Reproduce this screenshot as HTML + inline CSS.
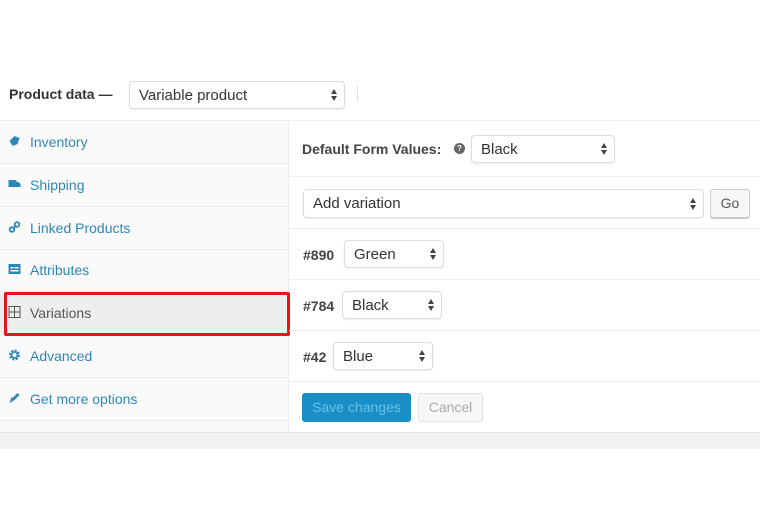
<!DOCTYPE html>
<html><head><style>
*{box-sizing:border-box;margin:0;padding:0}
body{width:760px;height:507px;background:#fff;font-family:"Liberation Sans",Arial,sans-serif;position:relative;overflow:hidden;color:#333}
.a{position:absolute}
.sel{position:absolute;background:#fff;border:1px solid #ddd;border-radius:4px;box-shadow:0 1px 2px rgba(0,0,0,.07);font-size:15px;color:#333;padding-left:9px;display:flex;align-items:center}
.arr{position:absolute;right:7px;top:50%;margin-top:-6px;width:6px;height:12px}
.arr:before{content:"";position:absolute;left:0;top:0;border-left:3px solid transparent;border-right:3px solid transparent;border-bottom:5px solid #444}
.arr:after{content:"";position:absolute;left:0;bottom:0;border-left:3px solid transparent;border-right:3px solid transparent;border-top:5px solid #444}
.side{position:absolute;left:0;top:121px;width:289px;height:311px;background:#fafafa;border-right:1px solid #eee}
.it{position:absolute;left:0;width:288px;height:43px;border-bottom:1px solid #eee;font-size:14px;color:#2e87b9;display:flex;align-items:center;padding-left:30px}
.ic{position:absolute;left:8px;top:14px;width:13px;height:12px}
.row{position:absolute;left:289px;width:471px;border-bottom:1px solid #eee}
.lab{position:absolute;font-size:14px;font-weight:bold;color:#444}
</style></head><body>
<div class="a" style="left:9px;top:86px;font-size:14px;font-weight:bold;color:#333">Product data —</div>
<div class="sel" style="left:129px;top:81px;width:216px;height:28px;font-size:15px">Variable product<span class="arr"></span></div>
<div class="a" style="left:357px;top:86px;width:1px;height:16px;background:#ddd"></div>
<div class="a" style="left:0;top:120px;width:760px;height:1px;background:#eee"></div>

<div class="side">
 <div class="it" style="top:0"><svg class="ic" viewBox="0 0 12 12"><path d="M1 6 L6 1 L11 3 L9 9 L4 11 Z" fill="#2e87b9"/></svg>Inventory</div>
 <div class="it" style="top:43px"><svg class="ic" viewBox="0 0 12 12"><rect x="0" y="2" width="8" height="7" fill="#2e87b9"/><path d="M8 4h2l2 2v3H8z" fill="#2e87b9"/></svg>Shipping</div>
 <div class="it" style="top:86px"><svg class="ic" viewBox="0 0 12 12"><circle cx="3.5" cy="8.5" r="2.3" fill="none" stroke="#2e87b9" stroke-width="1.8"/><circle cx="8.5" cy="3.5" r="2.3" fill="none" stroke="#2e87b9" stroke-width="1.8"/><path d="M4.5 7.5 L7.5 4.5" stroke="#2e87b9" stroke-width="1.6"/></svg>Linked Products</div>
 <div class="it" style="top:128px"><svg class="ic" viewBox="0 0 12 12"><rect x="0" y="1" width="12" height="10" fill="#2e87b9"/><rect x="2" y="4" width="3" height="1.5" fill="#fff"/><rect x="6" y="4" width="4" height="1.5" fill="#fff"/><rect x="2" y="7" width="8" height="1.5" fill="#fff"/></svg>Attributes</div>
 <div class="it" style="top:171px;background:#eee;color:#555"><svg class="ic" viewBox="0 0 12 12"><rect x="0.5" y="0.5" width="11" height="11" fill="none" stroke="#555"/><path d="M6 0v12M0 6h12" stroke="#555"/></svg>Variations</div>
 <div class="it" style="top:214px"><svg class="ic" viewBox="0 0 12 12"><circle cx="6" cy="6" r="4.2" fill="none" stroke="#2e87b9" stroke-width="2.6" stroke-dasharray="2 1.3"/><circle cx="6" cy="6" r="3" fill="none" stroke="#2e87b9" stroke-width="1.6"/></svg>Advanced</div>
 <div class="it" style="top:257px"><svg class="ic" viewBox="0 0 12 12"><path d="M1 11 L3 5 L6 8 Z M4 6 L9 1 L11 3 L6 8" fill="#2e87b9"/></svg>Get more options</div>
</div>
<div class="a" style="left:4px;top:292px;width:286px;height:44px;border:3px solid #e8141c;border-radius:2px"></div>

<div class="row" style="top:121px;height:56px"></div>
<div class="lab" style="left:302px;top:141px">Default Form Values:</div>
<div class="a" style="left:454px;top:143px;width:11px;height:11px;border-radius:50%;background:#666;color:#fff;font-size:8px;text-align:center;line-height:11px;font-weight:bold">?</div>
<div class="sel" style="left:471px;top:135px;width:144px;height:28px">Black<span class="arr"></span></div>

<div class="row" style="top:177px;height:52px"></div>
<div class="sel" style="left:303px;top:189px;width:401px;height:29px">Add variation<span class="arr"></span></div>
<div class="a" style="left:710px;top:189px;width:40px;height:29px;background:#f7f7f7;border:1px solid #ccc;border-radius:3px;box-shadow:0 1px 0 #ccc;font-size:14px;color:#555;text-align:center;line-height:27px">Go</div>

<div class="row" style="top:229px;height:51px"></div>
<div class="lab" style="left:303px;top:247px">#890</div>
<div class="sel" style="left:344px;top:240px;width:100px;height:28px">Green<span class="arr"></span></div>

<div class="row" style="top:280px;height:51px"></div>
<div class="lab" style="left:303px;top:298px">#784</div>
<div class="sel" style="left:342px;top:291px;width:100px;height:28px">Black<span class="arr"></span></div>

<div class="row" style="top:331px;height:51px"></div>
<div class="lab" style="left:303px;top:349px">#42</div>
<div class="sel" style="left:333px;top:342px;width:100px;height:28px">Blue<span class="arr"></span></div>

<div class="a" style="left:302px;top:393px;width:109px;height:29px;background:#1a8fc7;border-radius:3px;color:#66c0e6;font-size:14px;text-align:center;line-height:29px">Save changes</div>
<div class="a" style="left:418px;top:393px;width:65px;height:29px;background:#f7f7f7;border:1px solid #e2e2e2;border-radius:3px;color:#aaa;font-size:14px;text-align:center;line-height:27px">Cancel</div>

<div class="a" style="left:0;top:432px;width:760px;height:17px;background:#f1f1f1;border-top:1px solid #e5e5e5"></div>
</body></html>
